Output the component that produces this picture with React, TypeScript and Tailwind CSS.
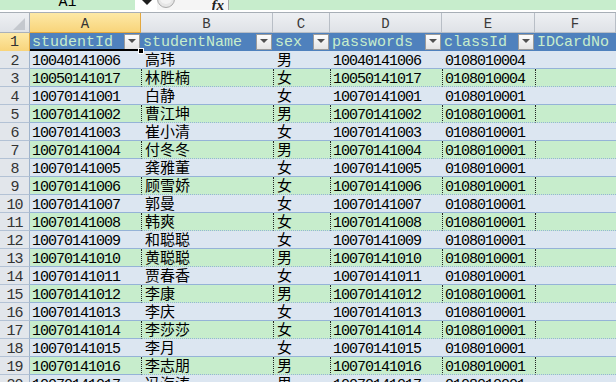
import React from "react";

const students: [string, string, string, string, string][] = [
  ["10040141006", "高玮", "男", "10040141006", "0108010004"],
  ["10050141017", "林胜楠", "女", "10050141017", "0108010004"],
  ["10070141001", "白静", "女", "10070141001", "0108010001"],
  ["10070141002", "曹江坤", "男", "10070141002", "0108010001"],
  ["10070141003", "崔小清", "女", "10070141003", "0108010001"],
  ["10070141004", "付冬冬", "男", "10070141004", "0108010001"],
  ["10070141005", "龚雅董", "女", "10070141005", "0108010001"],
  ["10070141006", "顾雪娇", "女", "10070141006", "0108010001"],
  ["10070141007", "郭曼", "女", "10070141007", "0108010001"],
  ["10070141008", "韩爽", "女", "10070141008", "0108010001"],
  ["10070141009", "和聪聪", "女", "10070141009", "0108010001"],
  ["10070141010", "黄聪聪", "男", "10070141010", "0108010001"],
  ["10070141011", "贾春香", "女", "10070141011", "0108010001"],
  ["10070141012", "李康", "男", "10070141012", "0108010001"],
  ["10070141013", "李庆", "女", "10070141013", "0108010001"],
  ["10070141014", "李莎莎", "女", "10070141014", "0108010001"],
  ["10070141015", "李月", "女", "10070141015", "0108010001"],
  ["10070141016", "李志朋", "男", "10070141016", "0108010001"],
  ["10070141017", "冯海涛", "男", "10070141017", "0108010001"],
];

const cols = "grid grid-cols-[30px_111px_132px_57px_112px_93px_1fr]";

function FilterButton() {
  return (
    <span className="mb-[1px] mr-[1px] flex h-[16px] w-[16px] shrink-0 items-center justify-center border border-[#9c9c9c] bg-gradient-to-b from-[#fdfdfd] to-[#e4e4e4]">
      <svg width="8" height="5" viewBox="0 0 8 5" className="mb-[2px]">
        <path d="M0 0h8L4 4z" fill="#505050" />
      </svg>
    </span>
  );
}

function FormulaBar() {
  return (
    <div className="flex h-[10px] items-end overflow-hidden">
      <div className="flex h-[24px] w-[135px] shrink-0 items-end justify-center bg-[#c7edcc] text-[15px] leading-[15px] text-black">
        A1
      </div>
      <div className="flex h-[10px] w-[22px] shrink-0 items-start justify-center bg-white">
        <svg width="10" height="5" viewBox="0 0 10 5" className="ml-[2px]">
          <path d="M0 0h10L5 5z" fill="#1f1f1f" />
        </svg>
      </div>
      <div className="flex h-[10px] w-[71px] shrink-0 items-start bg-[#f5f5f5]">
        <svg width="20" height="10" viewBox="0 0 20 10">
          <circle cx="9" cy="-1" r="8.5" fill="#e6e6e6" stroke="#a9a9a9" />
          <circle cx="9" cy="-2" r="6" fill="#f2f2f2" />
        </svg>
        <span className="ml-auto mr-[4px] flex h-[10px] items-end overflow-hidden">
          <span className="font-['Liberation_Serif',serif] text-[15px] font-bold italic leading-[10px] text-[#222]">
            fx
          </span>
        </span>
      </div>
      <div className="h-[10px] flex-1 border-l border-[#a9a9a9] bg-[#c7edcc]" />
    </div>
  );
}

function ColumnHeaders() {
  const letters = ["A", "B", "C", "D", "E", "F"];
  return (
    <div className={`${cols} h-[20px]`}>
      <div className="flex items-end justify-end border-b border-r border-[#aab1ba] bg-gradient-to-b from-[#eef0f3] to-[#dfe2e7] pb-[2px] pr-[4px]">
        <svg width="12" height="12" viewBox="0 0 12 12">
          <path d="M12 0V12H0z" fill="#c4c8ce" />
        </svg>
      </div>
      {letters.map((l, i) => (
        <div
          key={l}
          className={`flex items-end justify-center border-b border-r text-[14px] leading-[16px] ${
            i === 0
              ? "border-[#e3a83f] bg-gradient-to-b from-[#fde9a6] to-[#f8d47a] text-[#333]"
              : "border-[#b8bec6] bg-gradient-to-b from-[#eef0f3] to-[#dfe2e7] text-[#3a3a3a]"
          }`}
        >
          {l}
        </div>
      ))}
    </div>
  );
}

function HeaderRow() {
  const heads = ["studentId", "studentName", "sex", "passwords", "classId", "IDCardNo"];
  return (
    <div className={`${cols} h-[18px]`}>
      <div className="flex items-end justify-center border-r border-[#e3a83f] bg-gradient-to-b from-[#fde9a6] to-[#f8d47a] text-[15px] leading-[16px] text-[#333]">
        1
      </div>
      {heads.map((h, i) => (
        <div
          key={h}
          className="relative flex items-end justify-between overflow-visible bg-[#4f81bd] pl-[2px] text-[15px] leading-[16px] text-[#c7edcc]"
        >
          <span className="whitespace-nowrap">{h}</span>
          {i < 5 && <FilterButton />}
          {i === 0 && (
            <>
              <span className="absolute bottom-0 left-0 right-0 h-[2px] bg-black" />
              <span className="absolute -bottom-[3px] -right-[3px] z-10 h-[6px] w-[6px] border border-white bg-black" />
            </>
          )}
        </div>
      ))}
    </div>
  );
}

function DataRow({ n, row }: { n: number; row: [string, string, string, string, string] }) {
  const green = n % 2 === 1;
  const bg = green ? "bg-[#c7edcc]" : "bg-[#dce6f1]";
  const edge = green ? "border-l border-dotted border-l-[#222]" : "border-l border-l-transparent";
  const cell = `flex h-[18px] items-end border-b border-b-[#95b3d7] text-[15px] leading-[12px] whitespace-nowrap ${bg}`;
  return (
    <div className={cols}>
      <div className="flex h-[18px] items-end justify-center border-b border-r border-b-[#b3c2d5] border-r-[#9fb3cb] bg-[#e2e6eb] text-[15px] leading-[12px] tracking-[-1px] text-[#333]">
        {n}
      </div>
      <div className={`${cell} pl-[2px] tracking-[-1px]`}>{row[0]}</div>
      <div className={`${cell} ${edge} pl-[3px]`}>{row[1]}</div>
      <div className={`${cell} ${edge} pl-[3px]`}>{row[2]}</div>
      <div className={`${cell} ${edge} pl-[2px] tracking-[-1px]`}>{row[3]}</div>
      <div className={`${cell} ${edge} pl-[2px] tracking-[-1px]`}>{row[4]}</div>
      <div className={`${cell} ${edge}`} />
    </div>
  );
}

export default function App() {
  return (
    <div className="h-[382px] w-[616px] overflow-hidden bg-white font-['Liberation_Mono','Noto_Sans_CJK_SC',monospace] text-black">
      <FormulaBar />
      <div className="h-[3px] border-b border-[#a7aeb6] bg-white" />
      <ColumnHeaders />
      <HeaderRow />
      {students.map((row, i) => (
        <DataRow key={row[0]} n={i + 2} row={row} />
      ))}
    </div>
  );
}
